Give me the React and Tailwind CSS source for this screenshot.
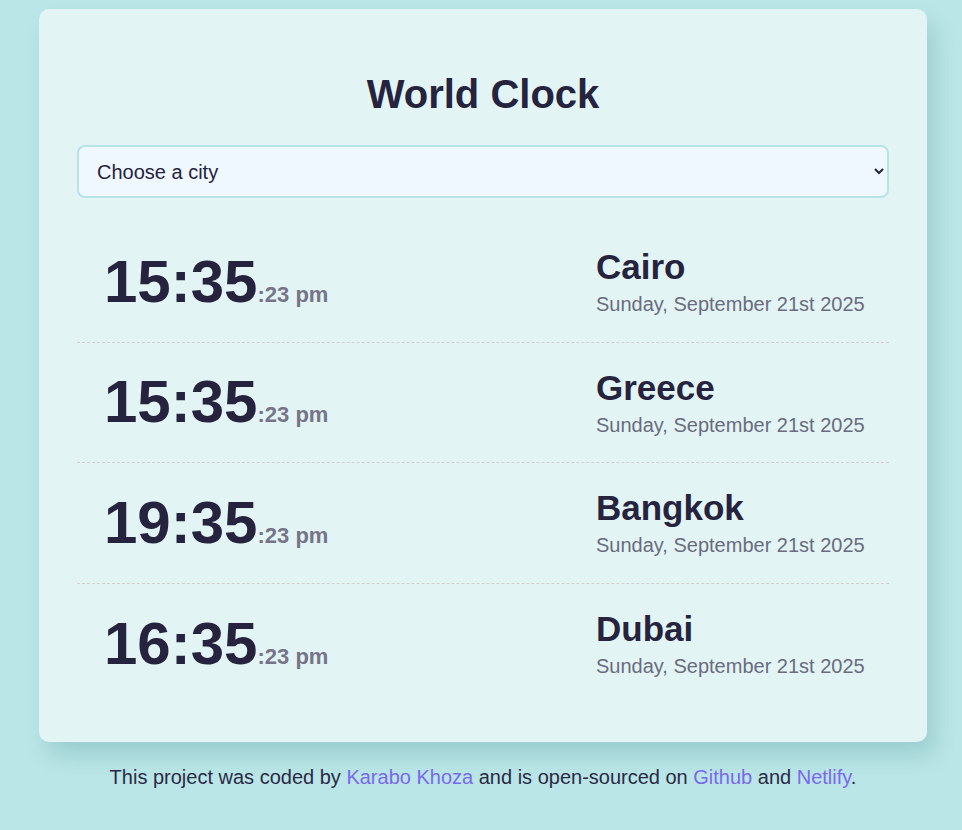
import React from "react";

const cities = [
  { time: "15:35", secs: ":23 pm", name: "Cairo" },
  { time: "15:35", secs: ":23 pm", name: "Greece" },
  { time: "19:35", secs: ":23 pm", name: "Bangkok" },
  { time: "16:35", secs: ":23 pm", name: "Dubai" },
];

function CityRow({ city, last }) {
  return (
    <div
      className={`flex items-center justify-between h-[120.5px] pl-[27px] pr-6 ${
        last ? "" : "border-b border-dashed border-[#d3cfcf]"
      }`}
    >
      <div className="flex items-baseline">
        <span className="text-[60px] font-bold text-[#26233f]">{city.time}</span>
        <span className="text-[22px] font-bold text-[#767488]">{city.secs}</span>
      </div>
      <div className="flex flex-col gap-[6px] w-[269px] whitespace-nowrap">
        <span className="text-[35px] leading-[40px] font-bold text-[#26233f]">{city.name}</span>
        <span className="text-[20px] leading-[23px] text-[#6b6b80]">
          Sunday, September 21st 2025
        </span>
      </div>
    </div>
  );
}

export default function App() {
  return (
    <div className="min-h-[830px] bg-[#bae6e7] pt-[9px] font-['Liberation_Sans',Arial,sans-serif]">
      <div className="ml-[39px] w-[888px] rounded-[10px] bg-[#e2f5f4] p-[38px] shadow-[8px_14px_22px_rgba(0,90,90,0.16)]">
        <h1 className="mt-6 mb-7 text-center text-[40px] leading-[46px] font-bold text-[#26233f]">
          World Clock
        </h1>
        <select className="block w-full h-[53px] rounded-[8px] border-2 border-[#b6e4e6] bg-[#eff8fe] pl-[14px] pr-3 text-[20px] text-[#26233f]">
          <option>Choose a city</option>
          <option>Cairo</option>
          <option>Greece</option>
          <option>Bangkok</option>
          <option>Dubai</option>
        </select>
        <div className="mt-6">
          {cities.map((c, i) => (
            <CityRow key={c.name} city={c} last={i === cities.length - 1} />
          ))}
        </div>
      </div>
      <p className="mt-6 text-center text-[20px] leading-[23px] text-[#2b2a45] pl-[4px]">
        This project was coded by{" "}
        <a href="#" className="text-[#7b68ee]">Karabo Khoza</a> and is open-sourced on{" "}
        <a href="#" className="text-[#7b68ee]">Github</a> and{" "}
        <a href="#" className="text-[#7b68ee]">Netlify</a>.
      </p>
    </div>
  );
}
